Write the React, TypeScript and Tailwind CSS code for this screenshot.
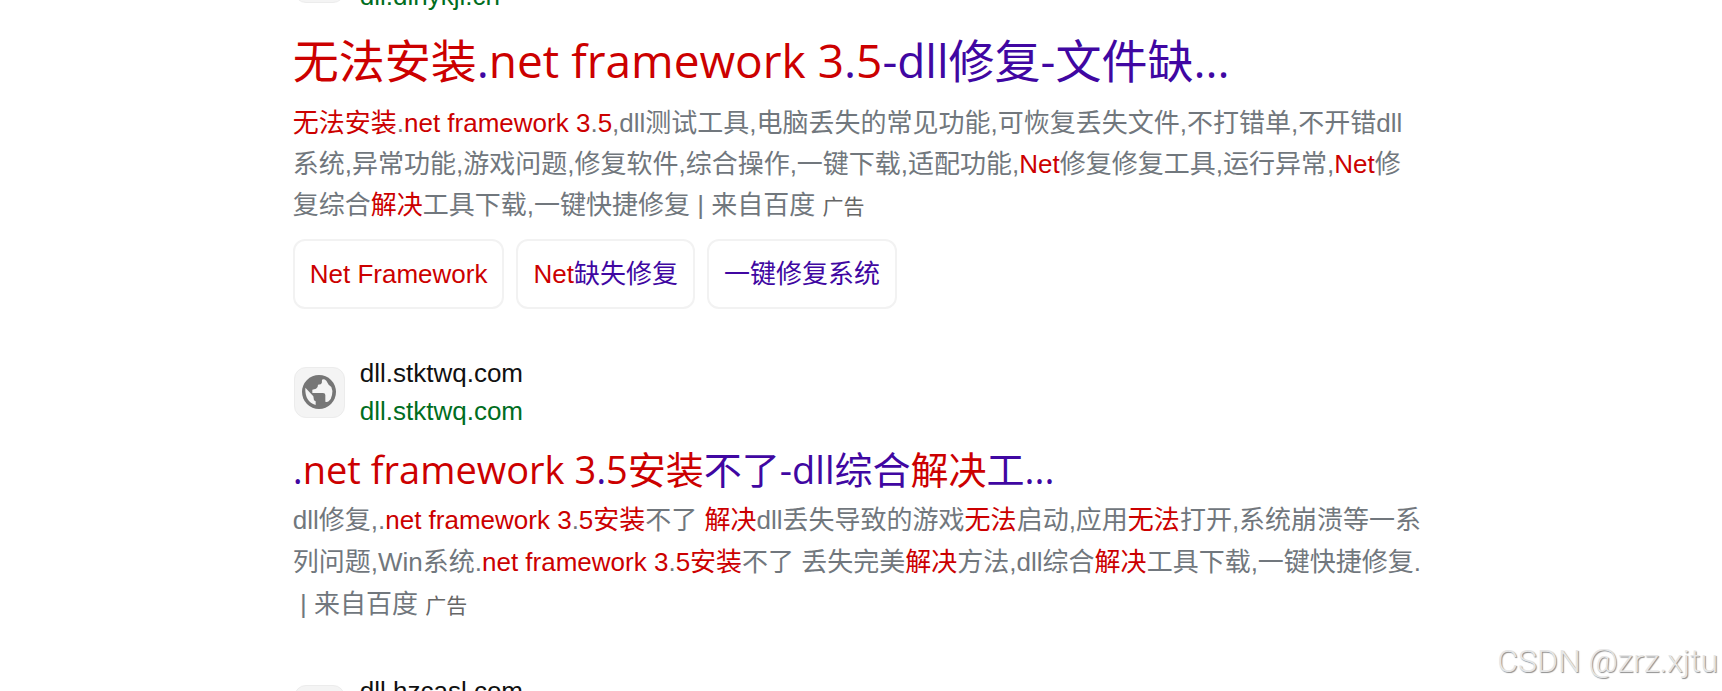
import type { ReactNode } from "react";

const Hit = ({ children }: { children: ReactNode }) => <em className="not-italic text-[#cc0000]">{children}</em>;

const Version = () => (
  <>
    .<Hit>net framework 3</Hit>.<Hit>5</Hit>
  </>
);

const Globe = () => (
  <svg viewBox="0 0 102 102" className="size-[34px]" aria-hidden="true">
    <circle cx="51" cy="51" r="51" fill="#767676" />
    <path
      d="M60 14 Q66 11 73 17 L80 29 L88 36 Q93 46 90 60 Q88 72 80 79 Q75 82 70 80 L70 60 Q70 54 63 54 L31 54 L31 44 L42 41 Q48 39 48 29 L56 28 Q61 25 60 14Z"
      fill="#f4f4f4"
    />
    <path d="M10 38 L34 64 L36 76 L41 79 L41 90 Q8 80 10 38Z" fill="#f4f4f4" />
  </svg>
);

function Site({ domain }: { domain: string }) {
  return (
    <div className="flex items-center gap-[15px] pl-px">
      <span className="flex size-[51px] items-center justify-center rounded-[12px] border border-[#ececec] bg-[#f4f4f4]">
        <Globe />
      </span>
      <div className="flex flex-col text-[26px] leading-[38px]">
        <span className="text-[#111111]">{domain}</span>
        <cite className="not-italic text-[#006d21]">{domain}</cite>
      </div>
    </div>
  );
}

const Source = () => (
  <>
    | 来自百度 <small className="text-[21px] text-[#666666]">广告</small>
  </>
);

function Chip({ children }: { children: ReactNode }) {
  return (
    <a href="#" className="flex h-[70px] items-center rounded-[12px] border-2 border-[#f2f2f2] px-[15px] text-[26px] text-[#4007a2]">
      <span>{children}</span>
    </a>
  );
}

const titleLink = "font-['Open_Sans','Noto_Sans_CJK_SC',sans-serif] text-[#4007a2]";
const snippet = "text-[26px] text-[#71777d]";

export default function App() {
  return (
    <div className="relative h-screen overflow-hidden bg-white font-['Liberation_Sans','Noto_Sans_CJK_SC',sans-serif]">
      <main className="-mt-[61px] pl-[17%] whitespace-nowrap">
        <article>
          <Site domain="dll.dlhykjl.cn" />
          <h2 className="mt-[12px] text-[46px] leading-[66px]">
            <a href="#" className={titleLink}>
              <Hit>无法安装</Hit>
              <Version />
              -dll修复-文件缺...
            </a>
          </h2>
          <p className={`mt-[8px] leading-[41px] ${snippet}`}>
            <Hit>无法安装</Hit>
            <Version />
            ,dll测试工具,电脑丢失的常见功能,可恢复丢失文件,不打错单,不开错dll
            <br />
            系统,异常功能,游戏问题,修复软件,综合操作,一键下载,适配功能,<Hit>Net</Hit>修复修复工具,运行异常,<Hit>Net</Hit>修
            <br />
            复综合<Hit>解决</Hit>工具下载,一键快捷修复 <Source />
          </p>
          <div className="mt-[12px] flex gap-3">
            <Chip>
              <Hit>Net Framework</Hit>
            </Chip>
            <Chip>
              <Hit>Net</Hit>缺失修复
            </Chip>
            <Chip>一键修复系统</Chip>
          </div>
        </article>
        <article className="mt-[45px]">
          <Site domain="dll.stktwq.com" />
          <h2 className="mt-[11px] text-[38px] leading-[56px]">
            <a href="#" className={titleLink}>
              <Version />
              <Hit>安装</Hit>不了-dll综合<Hit>解决</Hit>工...
            </a>
          </h2>
          <p className={`leading-[42px] ${snippet}`}>
            dll修复,
            <Version />
            <Hit>安装</Hit>不了 <Hit>解决</Hit>dll丢失导致的游戏<Hit>无法</Hit>启动,应用<Hit>无法</Hit>打开,系统崩溃等一系
            <br />
            列问题,Win系统
            <Version />
            <Hit>安装</Hit>不了 丢失完美<Hit>解决</Hit>方法,dll综合<Hit>解决</Hit>工具下载,一键快捷修复.
            <br />
            &nbsp;
            <Source />
          </p>
        </article>
        <article className="mt-[45px]">
          <Site domain="dll.hzcasl.com" />
        </article>
      </main>
      <div className="absolute right-1 bottom-2 font-['Roboto','Liberation_Sans',sans-serif] text-[32px] leading-[44px] font-light text-[#e6e6e6] [text-shadow:1px_1px_1px_#8c8c8c]">
        CSDN @zrz.xjtu
      </div>
    </div>
  );
}
